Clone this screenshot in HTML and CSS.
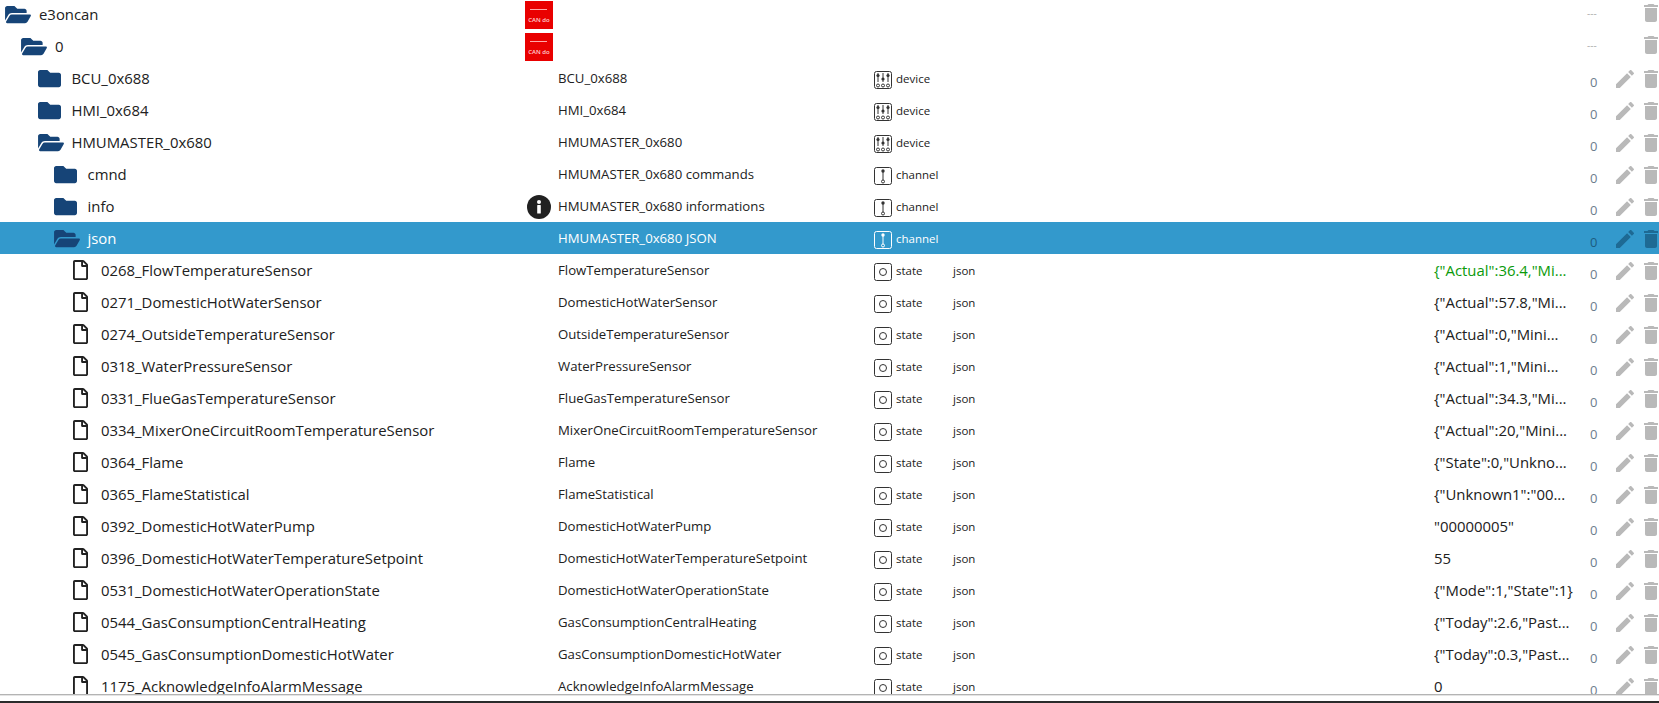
FILE: index.html
```html
<!DOCTYPE html>
<html lang="en">
<head>
<meta charset="utf-8">
<title>e3oncan objects</title>
<link rel="stylesheet" href="styles.css">
</head>
<body>
<svg class="defs" aria-hidden="true">
  <symbol id="i-open" viewBox="0 0 576 512"><path d="M572.694 292.093L500.27 416.248A63.997 63.997 0 0 1 444.989 448H45.025c-18.523 0-30.064-20.093-20.731-36.093l72.424-124.155A64 64 0 0 1 152 256h399.964c18.523 0 30.064 20.093 20.73 36.093zM152 224h328v-48c0-26.51-21.49-48-48-48H272l-64-64H48C21.49 64 0 85.49 0 112v278.046l69.077-118.418C86.214 242.25 117.989 224 152 224z"/></symbol>
  <symbol id="i-folder" viewBox="0 0 512 512"><path d="M464 128H272l-64-64H48C21.49 64 0 85.49 0 112v288c0 26.51 21.49 48 48 48h416c26.51 0 48-21.49 48-48V176c0-26.51-21.49-48-48-48z"/></symbol>
  <symbol id="i-file" viewBox="0 0 384 512"><path d="M369.9 97.9L286 14C277 5 264.8-.1 252.1-.1H48C21.5 0 0 21.5 0 48v416c0 26.5 21.5 48 48 48h288c26.5 0 48-21.5 48-48V131.9c0-12.7-5.1-25-14.1-34zM332.1 128H256V51.9l76.1 76.1zM48 464V48h160v104c0 13.3 10.7 24 24 24h104v288H48z"/></symbol>
  <symbol id="i-edit" viewBox="3 3 18 18"><path d="M3 17.25V21h3.75L17.81 9.94l-3.75-3.75L3 17.25zM20.71 7.04c.39-.39.39-1.02 0-1.41l-2.34-2.34c-.39-.39-1.02-.39-1.41 0l-1.83 1.83 3.75 3.75 1.83-1.83z"/></symbol>
  <symbol id="i-del" viewBox="5 3 14 18"><path d="M6 19c0 1.1.9 2 2 2h8c1.1 0 2-.9 2-2V7H6v12zM19 4h-3.5l-1-1h-5l-1 1H5v2h14V4z"/></symbol>
  <symbol id="i-device" viewBox="0 0 18 18"><g fill="none" stroke="currentColor"><rect x=".5" y=".5" width="17" height="17" rx="2"/><path d="M4 2v9M9 2v9M14 2v9"/><circle cx="4" cy="14.5" r="1.5"/><circle cx="9" cy="14.5" r="1.5"/><circle cx="14" cy="14.5" r="1.5"/></g><g fill="currentColor"><circle cx="4" cy="4.5" r="1.6"/><circle cx="9" cy="8" r="1.6"/><circle cx="14" cy="4.5" r="1.6"/></g></symbol>
  <symbol id="i-channel" viewBox="0 0 18 18"><g fill="none" stroke="currentColor"><rect x=".5" y=".5" width="17" height="17" rx="2"/><path d="M9 5v8"/><circle cx="9" cy="14.5" r="1.5"/></g><circle cx="9" cy="4" r="1.7" fill="currentColor"/></symbol>
  <symbol id="i-state" viewBox="0 0 18 18"><g fill="none" stroke="currentColor"><rect x=".5" y=".5" width="17" height="17" rx="2"/><circle cx="9" cy="9" r="3.5"/></g></symbol>
  <symbol id="i-info" viewBox="0 0 24 24"><circle cx="12" cy="12" r="12" fill="#212121"/><rect x="10.2" y="10" width="3.6" height="8.5" rx=".6" fill="#fff"/><circle cx="12" cy="7" r="2" fill="#fff"/></symbol>
</svg>

<main class="tree">
  <div class="list">
    <div class="row root">
      <div class="name d0"><svg class="ti open"><use href="#i-open"/></svg><span>e3oncan</span></div>
      <div class="deco"><div class="logo"><i class="logo-line"></i><span>CAN do</span></div></div>
      <div class="title"></div><div class="type"></div><div class="role"></div><div class="value"></div>
      <div class="count dash">---</div><div class="act"></div><div class="act"><svg class="del"><use href="#i-del"/></svg></div>
    </div>
    <div class="row root">
      <div class="name d1"><svg class="ti open"><use href="#i-open"/></svg><span>0</span></div>
      <div class="deco"><div class="logo"><i class="logo-line"></i><span>CAN do</span></div></div>
      <div class="title"></div><div class="type"></div><div class="role"></div><div class="value"></div>
      <div class="count dash">---</div><div class="act"></div><div class="act"><svg class="del"><use href="#i-del"/></svg></div>
    </div>
    <div class="row">
      <div class="name d2"><svg class="ti folder"><use href="#i-folder"/></svg><span>BCU_0x688</span></div>
      <div class="deco"></div><div class="title">BCU_0x688</div>
      <div class="type"><svg class="kind"><use href="#i-device"/></svg>device</div><div class="role"></div><div class="value"></div>
      <div class="count">0</div><div class="act"><svg class="edit"><use href="#i-edit"/></svg></div><div class="act"><svg class="del"><use href="#i-del"/></svg></div>
    </div>
    <div class="row">
      <div class="name d2"><svg class="ti folder"><use href="#i-folder"/></svg><span>HMI_0x684</span></div>
      <div class="deco"></div><div class="title">HMI_0x684</div>
      <div class="type"><svg class="kind"><use href="#i-device"/></svg>device</div><div class="role"></div><div class="value"></div>
      <div class="count">0</div><div class="act"><svg class="edit"><use href="#i-edit"/></svg></div><div class="act"><svg class="del"><use href="#i-del"/></svg></div>
    </div>
    <div class="row">
      <div class="name d2"><svg class="ti open"><use href="#i-open"/></svg><span>HMUMASTER_0x680</span></div>
      <div class="deco"></div><div class="title">HMUMASTER_0x680</div>
      <div class="type"><svg class="kind"><use href="#i-device"/></svg>device</div><div class="role"></div><div class="value"></div>
      <div class="count">0</div><div class="act"><svg class="edit"><use href="#i-edit"/></svg></div><div class="act"><svg class="del"><use href="#i-del"/></svg></div>
    </div>
    <div class="row">
      <div class="name d3"><svg class="ti folder"><use href="#i-folder"/></svg><span>cmnd</span></div>
      <div class="deco"></div><div class="title">HMUMASTER_0x680 commands</div>
      <div class="type"><svg class="kind"><use href="#i-channel"/></svg>channel</div><div class="role"></div><div class="value"></div>
      <div class="count">0</div><div class="act"><svg class="edit"><use href="#i-edit"/></svg></div><div class="act"><svg class="del"><use href="#i-del"/></svg></div>
    </div>
    <div class="row">
      <div class="name d3"><svg class="ti folder"><use href="#i-folder"/></svg><span>info</span></div>
      <div class="deco"><svg class="info"><use href="#i-info"/></svg></div><div class="title">HMUMASTER_0x680 informations</div>
      <div class="type"><svg class="kind"><use href="#i-channel"/></svg>channel</div><div class="role"></div><div class="value"></div>
      <div class="count">0</div><div class="act"><svg class="edit"><use href="#i-edit"/></svg></div><div class="act"><svg class="del"><use href="#i-del"/></svg></div>
    </div>
    <div class="row selected">
      <div class="name d3"><svg class="ti open"><use href="#i-open"/></svg><span>json</span></div>
      <div class="deco"></div><div class="title">HMUMASTER_0x680 JSON</div>
      <div class="type"><svg class="kind"><use href="#i-channel"/></svg>channel</div><div class="role"></div><div class="value"></div>
      <div class="count">0</div><div class="act"><svg class="edit"><use href="#i-edit"/></svg></div><div class="act"><svg class="del"><use href="#i-del"/></svg></div>
    </div>
    <div class="row">
      <div class="name d4"><svg class="ti file"><use href="#i-file"/></svg><span>0268_FlowTemperatureSensor</span></div>
      <div class="deco"></div><div class="title">FlowTemperatureSensor</div>
      <div class="type"><svg class="kind"><use href="#i-state"/></svg>state</div><div class="role">json</div><div class="value fresh">{"Actual":36.4,"Mi...</div>
      <div class="count">0</div><div class="act"><svg class="edit"><use href="#i-edit"/></svg></div><div class="act"><svg class="del"><use href="#i-del"/></svg></div>
    </div>
    <div class="row">
      <div class="name d4"><svg class="ti file"><use href="#i-file"/></svg><span>0271_DomesticHotWaterSensor</span></div>
      <div class="deco"></div><div class="title">DomesticHotWaterSensor</div>
      <div class="type"><svg class="kind"><use href="#i-state"/></svg>state</div><div class="role">json</div><div class="value">{"Actual":57.8,"Mi...</div>
      <div class="count">0</div><div class="act"><svg class="edit"><use href="#i-edit"/></svg></div><div class="act"><svg class="del"><use href="#i-del"/></svg></div>
    </div>
    <div class="row">
      <div class="name d4"><svg class="ti file"><use href="#i-file"/></svg><span>0274_OutsideTemperatureSensor</span></div>
      <div class="deco"></div><div class="title">OutsideTemperatureSensor</div>
      <div class="type"><svg class="kind"><use href="#i-state"/></svg>state</div><div class="role">json</div><div class="value">{"Actual":0,"Mini...</div>
      <div class="count">0</div><div class="act"><svg class="edit"><use href="#i-edit"/></svg></div><div class="act"><svg class="del"><use href="#i-del"/></svg></div>
    </div>
    <div class="row">
      <div class="name d4"><svg class="ti file"><use href="#i-file"/></svg><span>0318_WaterPressureSensor</span></div>
      <div class="deco"></div><div class="title">WaterPressureSensor</div>
      <div class="type"><svg class="kind"><use href="#i-state"/></svg>state</div><div class="role">json</div><div class="value">{"Actual":1,"Mini...</div>
      <div class="count">0</div><div class="act"><svg class="edit"><use href="#i-edit"/></svg></div><div class="act"><svg class="del"><use href="#i-del"/></svg></div>
    </div>
    <div class="row">
      <div class="name d4"><svg class="ti file"><use href="#i-file"/></svg><span>0331_FlueGasTemperatureSensor</span></div>
      <div class="deco"></div><div class="title">FlueGasTemperatureSensor</div>
      <div class="type"><svg class="kind"><use href="#i-state"/></svg>state</div><div class="role">json</div><div class="value">{"Actual":34.3,"Mi...</div>
      <div class="count">0</div><div class="act"><svg class="edit"><use href="#i-edit"/></svg></div><div class="act"><svg class="del"><use href="#i-del"/></svg></div>
    </div>
    <div class="row">
      <div class="name d4"><svg class="ti file"><use href="#i-file"/></svg><span>0334_MixerOneCircuitRoomTemperatureSensor</span></div>
      <div class="deco"></div><div class="title">MixerOneCircuitRoomTemperatureSensor</div>
      <div class="type"><svg class="kind"><use href="#i-state"/></svg>state</div><div class="role">json</div><div class="value">{"Actual":20,"Mini...</div>
      <div class="count">0</div><div class="act"><svg class="edit"><use href="#i-edit"/></svg></div><div class="act"><svg class="del"><use href="#i-del"/></svg></div>
    </div>
    <div class="row">
      <div class="name d4"><svg class="ti file"><use href="#i-file"/></svg><span>0364_Flame</span></div>
      <div class="deco"></div><div class="title">Flame</div>
      <div class="type"><svg class="kind"><use href="#i-state"/></svg>state</div><div class="role">json</div><div class="value">{"State":0,"Unkno...</div>
      <div class="count">0</div><div class="act"><svg class="edit"><use href="#i-edit"/></svg></div><div class="act"><svg class="del"><use href="#i-del"/></svg></div>
    </div>
    <div class="row">
      <div class="name d4"><svg class="ti file"><use href="#i-file"/></svg><span>0365_FlameStatistical</span></div>
      <div class="deco"></div><div class="title">FlameStatistical</div>
      <div class="type"><svg class="kind"><use href="#i-state"/></svg>state</div><div class="role">json</div><div class="value">{"Unknown1":"00...</div>
      <div class="count">0</div><div class="act"><svg class="edit"><use href="#i-edit"/></svg></div><div class="act"><svg class="del"><use href="#i-del"/></svg></div>
    </div>
    <div class="row">
      <div class="name d4"><svg class="ti file"><use href="#i-file"/></svg><span>0392_DomesticHotWaterPump</span></div>
      <div class="deco"></div><div class="title">DomesticHotWaterPump</div>
      <div class="type"><svg class="kind"><use href="#i-state"/></svg>state</div><div class="role">json</div><div class="value">"00000005"</div>
      <div class="count">0</div><div class="act"><svg class="edit"><use href="#i-edit"/></svg></div><div class="act"><svg class="del"><use href="#i-del"/></svg></div>
    </div>
    <div class="row">
      <div class="name d4"><svg class="ti file"><use href="#i-file"/></svg><span>0396_DomesticHotWaterTemperatureSetpoint</span></div>
      <div class="deco"></div><div class="title">DomesticHotWaterTemperatureSetpoint</div>
      <div class="type"><svg class="kind"><use href="#i-state"/></svg>state</div><div class="role">json</div><div class="value">55</div>
      <div class="count">0</div><div class="act"><svg class="edit"><use href="#i-edit"/></svg></div><div class="act"><svg class="del"><use href="#i-del"/></svg></div>
    </div>
    <div class="row">
      <div class="name d4"><svg class="ti file"><use href="#i-file"/></svg><span>0531_DomesticHotWaterOperationState</span></div>
      <div class="deco"></div><div class="title">DomesticHotWaterOperationState</div>
      <div class="type"><svg class="kind"><use href="#i-state"/></svg>state</div><div class="role">json</div><div class="value">{"Mode":1,"State":1}</div>
      <div class="count">0</div><div class="act"><svg class="edit"><use href="#i-edit"/></svg></div><div class="act"><svg class="del"><use href="#i-del"/></svg></div>
    </div>
    <div class="row">
      <div class="name d4"><svg class="ti file"><use href="#i-file"/></svg><span>0544_GasConsumptionCentralHeating</span></div>
      <div class="deco"></div><div class="title">GasConsumptionCentralHeating</div>
      <div class="type"><svg class="kind"><use href="#i-state"/></svg>state</div><div class="role">json</div><div class="value">{"Today":2.6,"Past...</div>
      <div class="count">0</div><div class="act"><svg class="edit"><use href="#i-edit"/></svg></div><div class="act"><svg class="del"><use href="#i-del"/></svg></div>
    </div>
    <div class="row">
      <div class="name d4"><svg class="ti file"><use href="#i-file"/></svg><span>0545_GasConsumptionDomesticHotWater</span></div>
      <div class="deco"></div><div class="title">GasConsumptionDomesticHotWater</div>
      <div class="type"><svg class="kind"><use href="#i-state"/></svg>state</div><div class="role">json</div><div class="value">{"Today":0.3,"Past...</div>
      <div class="count">0</div><div class="act"><svg class="edit"><use href="#i-edit"/></svg></div><div class="act"><svg class="del"><use href="#i-del"/></svg></div>
    </div>
    <div class="row">
      <div class="name d4"><svg class="ti file"><use href="#i-file"/></svg><span>1175_AcknowledgeInfoAlarmMessage</span></div>
      <div class="deco"></div><div class="title">AcknowledgeInfoAlarmMessage</div>
      <div class="type"><svg class="kind"><use href="#i-state"/></svg>state</div><div class="role">json</div><div class="value">0</div>
      <div class="count">0</div><div class="act"><svg class="edit"><use href="#i-edit"/></svg></div><div class="act"><svg class="del"><use href="#i-del"/></svg></div>
    </div>
  </div>
</main>
<div class="gap"></div>
<div class="bottom"></div>
</body>
</html>
```
FILE: styles.css
```css
* { box-sizing: border-box; }
html, body { margin: 0; height: 100%; }
body {
  background: #fff;
  color: #212121;
  font-family: "Open Sans", "Noto Sans", sans-serif;
  font-size: 13.2px;
  display: flex;
  flex-direction: column;
  overflow: hidden;
}
.defs { display: none; }
.tree {
  height: 695px;
  flex: none;
  overflow: hidden;
  border-bottom: 1px solid #b4b4b4;
}
.list { margin-top: -2px; }
.row {
  display: grid;
  grid-template-columns: 524px 34px 316px 79px 481px 156px 26px 28px 15px;
  height: 32px;
  align-items: center;
}
.row.selected { background: #3399cc; color: #fff; }
.name { display: flex; align-items: center; white-space: nowrap; font-size: 14.9px; }
.d0 { padding-left: 5px; }
.d1 { padding-left: 21px; }
.d2 { padding-left: 37.5px; }
.d3 { padding-left: 53.5px; }
.d4 { padding-left: 73px; }
.ti { fill: #164477; display: block; flex: none; }
.ti.open { width: 26px; height: 23px; margin-right: 8px; }
.ti.folder { width: 23px; height: 23px; margin-right: 11px; }
.ti.file { width: 15px; height: 20px; margin-right: 13px; fill: #212121; }
.deco { display: flex; justify-content: flex-start; }
.logo {
  width: 28px;
  height: 28px;
  margin-left: 1px;
  margin-top: 1px;
  background: #e90000;
  color: #ffd0d0;
  font-size: 6px;
  font-weight: 600;
  line-height: 6px;
  text-align: center;
  white-space: nowrap;
  overflow: hidden;
  padding-top: 8px;
}
.logo-line { display: block; height: 1px; margin: 0 6px 7px 5px; background: #ffa8a8; }
.info { width: 24px; height: 24px; display: block; margin-left: 3px; margin-top: 1px; }
.title { white-space: nowrap; }
.type { display: flex; align-items: center; font-size: 11.5px; margin-top: 1px; }
.kind { width: 18px; height: 18px; flex: none; margin-right: 4px; margin-top: 3px; color: #333; }
.selected .kind { color: #fff; }
.role { font-size: 11.5px; margin-top: 1px; }
.value { font-size: 14.9px; white-space: nowrap; }
.fresh { color: #0a9a0a; }
.count { font-size: 13px; color: #6d7d8d; padding-top: 8px; white-space: nowrap; }
.count.dash { font-size: 10px; color: #b0b0b0; padding: 0; margin: -2px 0 0 -3px; }
.selected .count { color: #1d5c80; }
.act { display: flex; align-items: center; padding-top: 2px; }
.root .act { padding-top: 0; padding-bottom: 2px; }
.edit { width: 18px; height: 18px; fill: #b9b9b9; }
.del { width: 14px; height: 18px; fill: #b9b9b9; }
.selected .edit { fill: #1e6a94; }
.selected .del { fill: #1e6a94; }
.gap { height: 6px; flex: none; border-top: 1px solid #e4e4e4; }
.bottom { flex: 1; background: #2b2b2b; }
```
